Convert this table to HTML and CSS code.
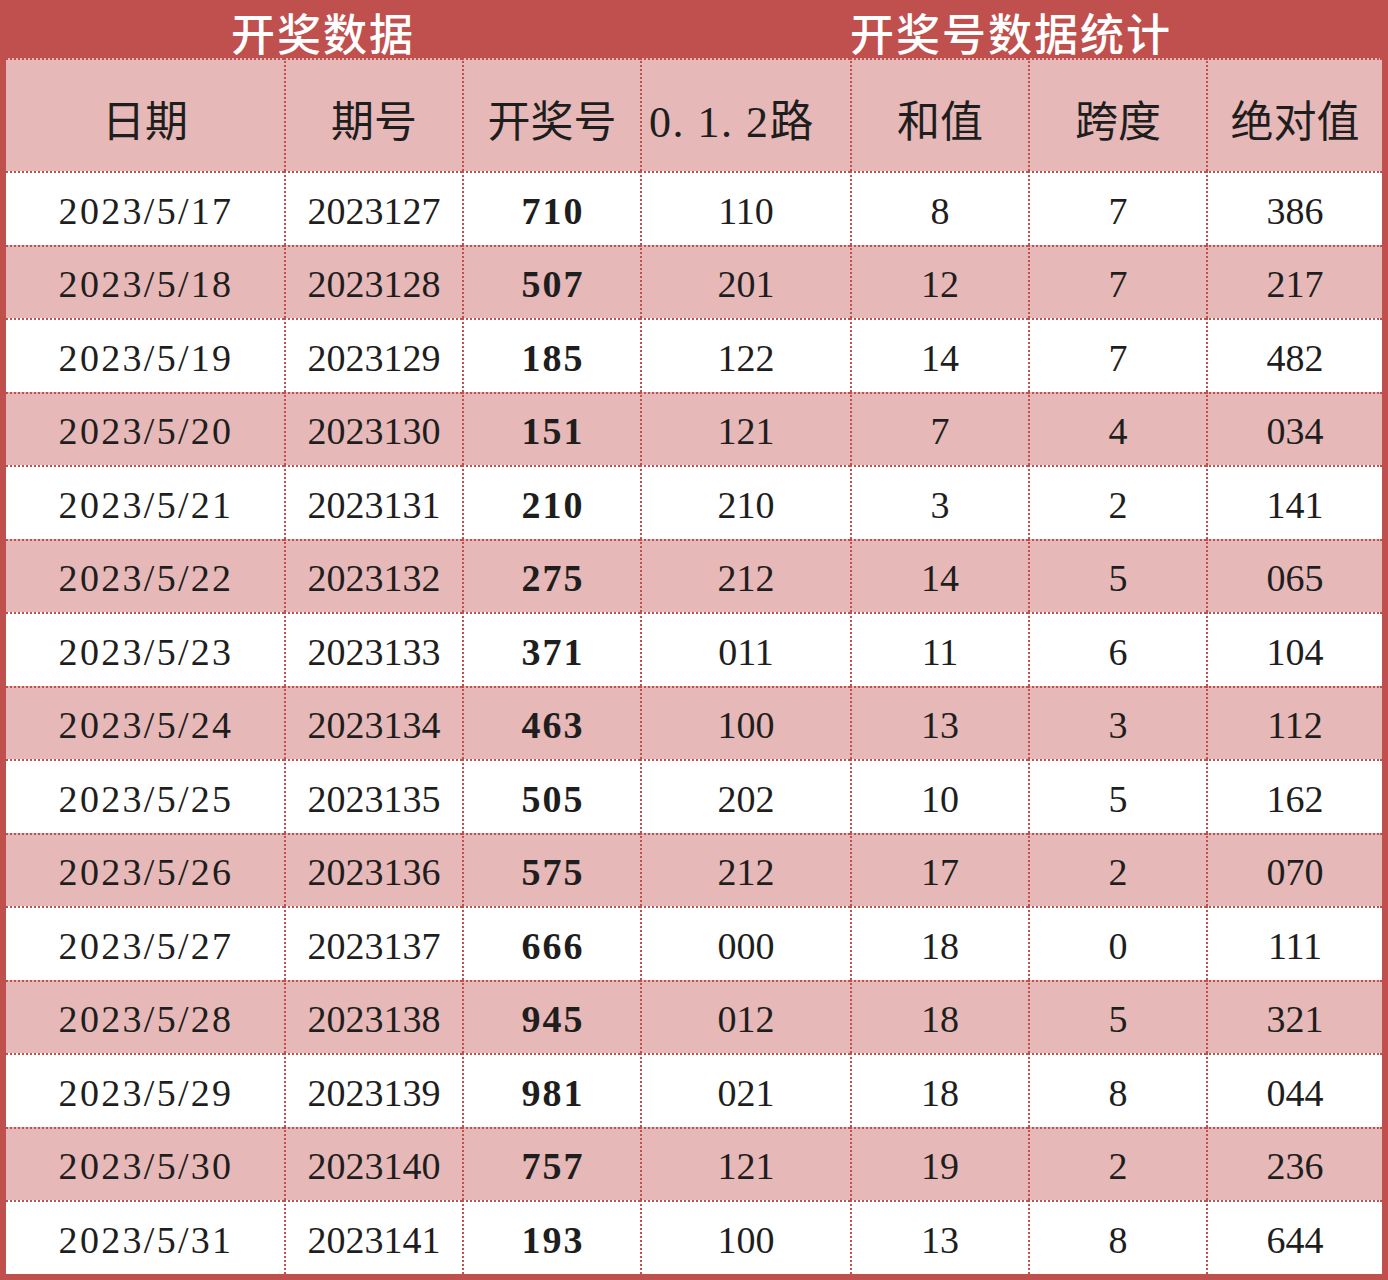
FILE: index.html
```html
<!DOCTYPE html>
<html lang="zh">
<head>
<meta charset="utf-8">
<title>开奖数据</title>
<link rel="stylesheet" href="styles.css">
</head>
<body>
<table class="sheet">
<colgroup>
<col class="c1"><col class="c2"><col class="c3"><col class="c4"><col class="c5"><col class="c6"><col class="c7">
</colgroup>
<thead>
<tr class="title">
<th colspan="3">开奖数据</th>
<th colspan="4">开奖号数据统计</th>
</tr>
<tr class="head">
<th>日期</th><th>期号</th><th>开奖号</th><th class="road">0.&nbsp;1.&nbsp;2路</th><th>和值</th><th>跨度</th><th>绝对值</th>
</tr>
</thead>
<tbody>
<tr><td class="date">2023/5/17</td><td>2023127</td><td class="num">710</td><td>110</td><td>8</td><td>7</td><td>386</td></tr>
<tr class="alt"><td class="date">2023/5/18</td><td>2023128</td><td class="num">507</td><td>201</td><td>12</td><td>7</td><td>217</td></tr>
<tr><td class="date">2023/5/19</td><td>2023129</td><td class="num">185</td><td>122</td><td>14</td><td>7</td><td>482</td></tr>
<tr class="alt"><td class="date">2023/5/20</td><td>2023130</td><td class="num">151</td><td>121</td><td>7</td><td>4</td><td>034</td></tr>
<tr><td class="date">2023/5/21</td><td>2023131</td><td class="num">210</td><td>210</td><td>3</td><td>2</td><td>141</td></tr>
<tr class="alt"><td class="date">2023/5/22</td><td>2023132</td><td class="num">275</td><td>212</td><td>14</td><td>5</td><td>065</td></tr>
<tr><td class="date">2023/5/23</td><td>2023133</td><td class="num">371</td><td>011</td><td>11</td><td>6</td><td>104</td></tr>
<tr class="alt"><td class="date">2023/5/24</td><td>2023134</td><td class="num">463</td><td>100</td><td>13</td><td>3</td><td>112</td></tr>
<tr><td class="date">2023/5/25</td><td>2023135</td><td class="num">505</td><td>202</td><td>10</td><td>5</td><td>162</td></tr>
<tr class="alt"><td class="date">2023/5/26</td><td>2023136</td><td class="num">575</td><td>212</td><td>17</td><td>2</td><td>070</td></tr>
<tr><td class="date">2023/5/27</td><td>2023137</td><td class="num">666</td><td>000</td><td>18</td><td>0</td><td>111</td></tr>
<tr class="alt"><td class="date">2023/5/28</td><td>2023138</td><td class="num">945</td><td>012</td><td>18</td><td>5</td><td>321</td></tr>
<tr><td class="date">2023/5/29</td><td>2023139</td><td class="num">981</td><td>021</td><td>18</td><td>8</td><td>044</td></tr>
<tr class="alt"><td class="date">2023/5/30</td><td>2023140</td><td class="num">757</td><td>121</td><td>19</td><td>2</td><td>236</td></tr>
<tr><td class="date">2023/5/31</td><td>2023141</td><td class="num">193</td><td>100</td><td>13</td><td>8</td><td>644</td></tr>
</tbody>
</table>
</body>
</html>
```
FILE: styles.css
```css
html, body {
  margin: 0;
  padding: 0;
  background: #ffffff;
}
.sheet {
  width: 1388px;
  border-collapse: separate;
  border-spacing: 0;
  table-layout: fixed;
  background: #c0504d;
  padding: 0 6px 6px 6px;
  box-sizing: border-box;
}
.c1 { width: 278px; }
.c2 { width: 178px; }
.c3 { width: 178px; }
.c4 { width: 210px; }
.c5 { width: 178px; }
.c6 { width: 178px; }
.c7 { width: 176px; }

.title th {
  height: 58px;
  padding: 6px 0 0 0;
  box-sizing: border-box;
  color: #ffffff;
  font-family: "Noto Sans CJK SC", sans-serif;
  font-weight: 500;
  font-size: 44px;
  line-height: 52px;
  letter-spacing: 2px;
  vertical-align: top;
  background: #c0504d;
}
.head th {
  height: 113px;
  padding: 5px 0 0 0;
  box-sizing: border-box;
  background: #e6b8b7;
  font-family: "Noto Sans CJK SC", sans-serif;
  font-weight: 400;
  font-size: 43px;
  color: #1e1e1e;
  border-top: 2px dotted #c0504d;
  border-left: 2px dotted #c0504d;
  vertical-align: middle;
}
.head th:first-child { border-left: none; }
.head th.road {
  font-family: "Liberation Serif", "Noto Sans CJK SC", serif;
  font-weight: 400;
  font-size: 44px;
  letter-spacing: 1.5px;
  text-align: left;
  padding-left: 7px;
}
td {
  height: 73.5px;
  padding: 4px 0 0 0;
  box-sizing: border-box;
  text-align: center;
  vertical-align: middle;
  font-family: "Liberation Serif", "Noto Sans CJK SC", serif;
  font-size: 38px;
  color: #1e1e1e;
  background: #ffffff;
  border-top: 2px dotted #c0504d;
  border-left: 2px dotted #c0504d;
}
td:first-child { border-left: none; }
tr.alt td { background: #e6b8b7; }
td.date { letter-spacing: 2.3px; padding-left: 2px; }
td.num { font-weight: 700; letter-spacing: 2px; padding-left: 2px; }
```
